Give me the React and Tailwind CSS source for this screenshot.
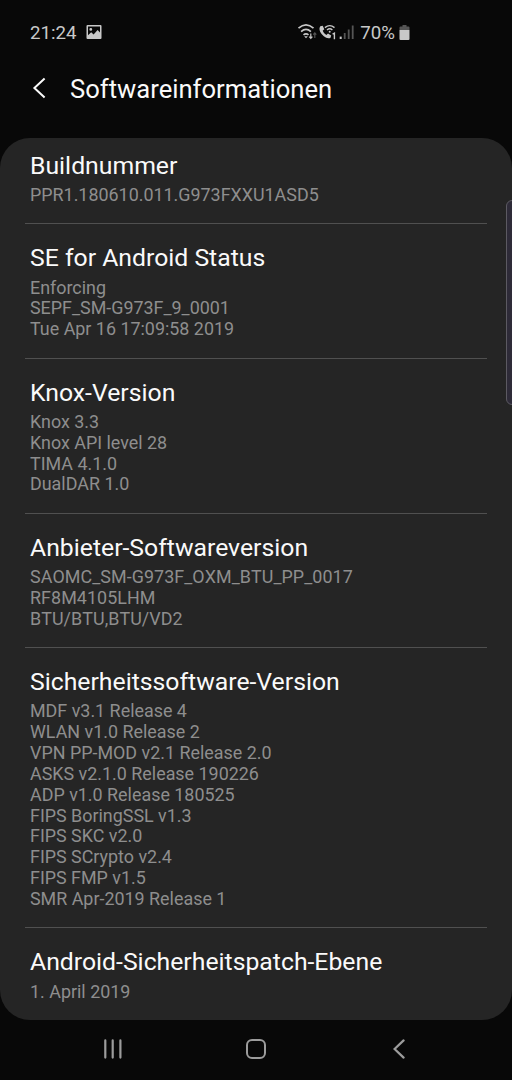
const sections = [
  { title: 'Buildnummer', lines: ['PPR1.180610.011.G973FXXU1ASD5'] },
  {
    title: 'SE for Android Status',
    lines: ['Enforcing', 'SEPF_SM-G973F_9_0001', 'Tue Apr 16 17:09:58 2019'],
  },
  {
    title: 'Knox-Version',
    lines: ['Knox 3.3', 'Knox API level 28', 'TIMA 4.1.0', 'DualDAR 1.0'],
  },
  {
    title: 'Anbieter-Softwareversion',
    lines: ['SAOMC_SM-G973F_OXM_BTU_PP_0017', 'RF8M4105LHM', 'BTU/BTU,BTU/VD2'],
    unkerned: true,
  },
  {
    title: 'Sicherheitssoftware-Version',
    lines: [
      'MDF v3.1 Release 4',
      'WLAN v1.0 Release 2',
      'VPN PP-MOD v2.1 Release 2.0',
      'ASKS v2.1.0 Release 190226',
      'ADP v1.0 Release 180525',
      'FIPS BoringSSL v1.3',
      'FIPS SKC v2.0',
      'FIPS SCrypto v2.4',
      'FIPS FMP v1.5',
      'SMR Apr-2019 Release 1',
    ],
  },
  { title: 'Android-Sicherheitspatch-Ebene', lines: ['1. April 2019'] },
]

export default function App() {
  return (
    <div className="relative flex h-[1080px] w-[512px] flex-col overflow-hidden bg-[#080808] font-['Roboto',sans-serif]">
      <StatusBar />

      <header className="flex h-[74px] items-center pb-[24px] pl-[32px]">
        <button aria-label="Zurück" className="flex w-[38px] pb-[3px] text-[#fafafa]">
          <svg width="15" height="22" viewBox="0 0 15 22" fill="none" stroke="currentColor" strokeWidth="2">
            <path d="M12.600 1.600L2.400 11l10.200 9.400" />
          </svg>
        </button>
        <h1 className="text-[25.6px] leading-[30px] text-[#fafafa]">Softwareinformationen</h1>
      </header>

      <main className="h-[882px] rounded-[30px] bg-[#252525] px-[25px]">
        {sections.map((section) => (
          <Section key={section.title} {...section} />
        ))}
      </main>

      <NavBar />

      {/* Edge panel handle */}
      <div className="absolute top-[200px] right-[-6px] h-[205px] w-[12px] rounded-[7px] border border-[#5c5a62] bg-[#2e2b38]" />
    </div>
  )
}

function Section({ title, lines, unkerned }) {
  return (
    <section className="border-b border-[#505050] px-[5px] pt-[20px] pb-[17.5px] first:pt-[13.6px] last:border-b-0">
      <h2 className="text-[24.78px] leading-[28.4px] whitespace-nowrap text-[#fafafa]">{title}</h2>
      <div
        className={`pt-[4.9px] text-[17.9px] leading-[20.85px] text-[#8e8e8e] ${unkerned ? 'tracking-[0.06px] [font-kerning:none]' : ''}`}
      >
        {lines.map((line) => (
          <p key={line} className="whitespace-nowrap">{line}</p>
        ))}
      </div>
    </section>
  )
}

function StatusBar() {
  return (
    <div className="flex h-[64px] items-center justify-between pt-[2px] pr-[102px] pl-[30px] text-[18.7px] text-[#c8c8c8]">
      <div className="flex items-center gap-[9px]">
        <span>21:24</span>
        <svg className="mb-[2px]" width="16" height="16" viewBox="0 0 16 16">
          <path
            fill="currentColor"
            fillRule="evenodd"
            d="M1.500 1h13q1 0 1 1v12q0 1-1 1h-13q-1 0-1-1V2q0-1 1-1zM2 2.500v8.700l3.200-3 2.400 2.200 4-4.300 2.400 2.400v-6zM4.800 4a1.400 1.400 0 1 1 0 2.800a1.400 1.400 0 0 1 0-2.800z"
          />
        </svg>
      </div>
      <div className="flex items-center">
        <svg className="mb-[2px]" width="58" height="18" viewBox="0 0 58 18" fill="none" stroke="currentColor">
          {/* Wi-Fi with traffic arrows */}
          <g strokeWidth="1.700">
            <path d="M1.500 5.200q7.500-6.600 15 0" />
            <path d="M4.100 8.600q4.900-4.300 9.800 0" />
            <path d="M6.500 11.800q2.500-2 5 0" />
          </g>
          <path d="M7.100 13.200h3.800l-1.900 2z" fill="currentColor" stroke="none" />
          <path d="M13.800 10.500v5M12.200 13.600l1.600 1.800 1.600-1.800" strokeWidth="1.200" />
          <path d="M17.800 15v-5M16.300 11.600l1.500-1.700 1.500 1.700" stroke="#555" strokeWidth="1.200" />
          {/* Wi-Fi calling */}
          <path
            d="M23.300 3.200l2.400-.5 1.600 3.500-1.600 1.500q1 2.800 3.600 4.300l1.700-1.400 3.200 2-.8 2.300q-3 1.300-6.600-1.600q-4.800-4.200-4.300-8.300z"
            fill="currentColor"
            stroke="none"
          />
          <path d="M27.900 4.600q4.800-4 9.600 0M30 7q2.700-2.300 5.400 0" strokeWidth="1.400" />
          <circle cx="32.700" cy="8.800" r="1" fill="currentColor" stroke="none" />
          <path d="M35.600 11.200l1.800-1v6" strokeWidth="1.400" />
          {/* Signal bars */}
          <path d="M43.700 13.600v2.400" strokeWidth="2" />
          <path d="M47.700 10v6M51.700 6.400V16M55.700 2.400V16" stroke="#555" strokeWidth="1.800" />
        </svg>
        <span className="ml-[5px]">70%</span>
        <svg className="ml-[4px]" width="11" height="15" viewBox="0 0 10 15">
          <path d="M3 0h4v1.600h2q1 0 1 1V5H0V2.600q0-1 1-1h2z" fill="#555" />
          <path d="M0 5h10v9q0 1-1 1H1q-1 0-1-1z" fill="currentColor" />
        </svg>
      </div>
    </div>
  )
}

function NavBar() {
  return (
    <nav className="flex h-[60px] items-center pb-[2px] pl-[103px] text-[#9c9c9c]">
      <svg width="20" height="20" viewBox="0 0 20 20" fill="none" stroke="currentColor" strokeWidth="2.200" strokeLinecap="round">
        <path d="M2.300 1.400v17.200M9.700 1.400v17.200M17.400 1.400v17.200" />
      </svg>
      <svg className="ml-[122px]" width="22" height="22" viewBox="0 0 22 22" fill="none" stroke="currentColor" strokeWidth="2">
        <rect x="2" y="2" width="18" height="18" rx="5" />
      </svg>
      <svg className="ml-[125px]" width="14" height="20" viewBox="0 0 14 20" fill="none" stroke="currentColor" strokeWidth="2.200" strokeLinecap="round">
        <path d="M11.600 1.400L2.600 10l9 8.600" />
      </svg>
    </nav>
  )
}
